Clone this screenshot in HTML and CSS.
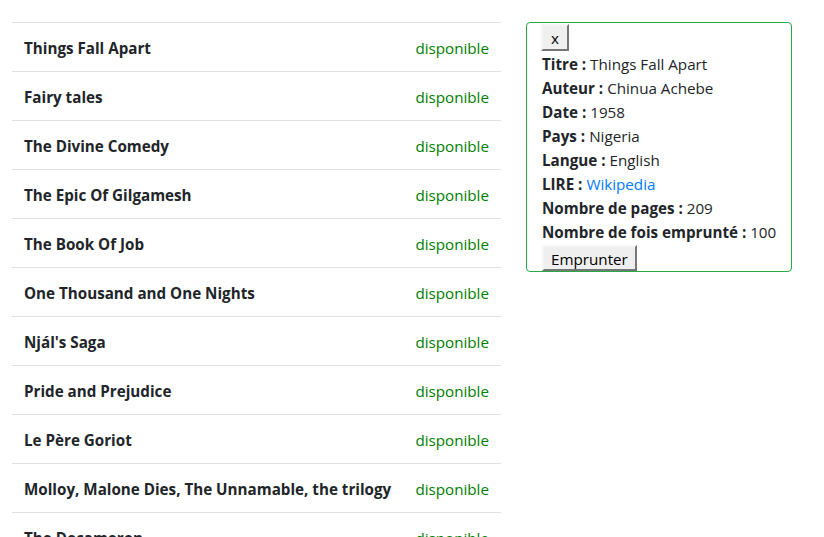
FILE: index.html
```html
<!DOCTYPE html>
<html lang="fr">
<head>
<meta charset="utf-8">
<title>Livres</title>
<link rel="stylesheet" href="styles.css">
</head>
<body>
<div class="page">
  <div class="list-col">
    <table class="books">
      <tbody>
        <tr><td class="title">Things Fall Apart</td><td class="status">disponible</td></tr>
        <tr><td class="title">Fairy tales</td><td class="status">disponible</td></tr>
        <tr><td class="title">The Divine Comedy</td><td class="status">disponible</td></tr>
        <tr><td class="title">The Epic Of Gilgamesh</td><td class="status">disponible</td></tr>
        <tr><td class="title">The Book Of Job</td><td class="status">disponible</td></tr>
        <tr><td class="title">One Thousand and One Nights</td><td class="status">disponible</td></tr>
        <tr><td class="title">Njál's Saga</td><td class="status">disponible</td></tr>
        <tr><td class="title">Pride and Prejudice</td><td class="status">disponible</td></tr>
        <tr><td class="title">Le Père Goriot</td><td class="status">disponible</td></tr>
        <tr><td class="title">Molloy, Malone Dies, The Unnamable, the trilogy</td><td class="status">disponible</td></tr>
        <tr><td class="title">The Decameron</td><td class="status">disponible</td></tr>
      </tbody>
    </table>
  </div>
  <div class="detail-col">
    <div class="detail">
      <button class="btn btn-close">x</button>
      <div class="line"><b>Titre :</b> Things Fall Apart</div>
      <div class="line"><b>Auteur :</b> Chinua Achebe</div>
      <div class="line"><b>Date :</b> 1958</div>
      <div class="line"><b>Pays :</b> Nigeria</div>
      <div class="line"><b>Langue :</b> English</div>
      <div class="line"><b>LIRE :</b> <a href="#">Wikipedia</a></div>
      <div class="line"><b>Nombre de pages :</b> 209</div>
      <div class="line"><b>Nombre de fois emprunté :</b> 100</div>
      <button class="btn">Emprunter</button>
    </div>
  </div>
</div>
</body>
</html>
```

FILE: styles.css
```css
html, body {
  margin: 0;
  padding: 0;
}
body {
  font-family: "Open Sans", "Noto Sans", sans-serif;
  font-size: 15.2px;
  line-height: 24px;
  color: #212529;
  background: #fff;
}
.page {
  display: flex;
  align-items: flex-start;
  padding: 22px 0 0 12px;
  gap: 25px;
}
.list-col {
  width: 489px;
}
.books {
  width: 100%;
  border-collapse: collapse;
}
.books td {
  border-top: 1px solid #dee2e6;
  padding: 13px 12px 11px;
  height: 24px;
}
.books .title {
  font-weight: 700;
  white-space: nowrap;
}
.books .status {
  text-align: right;
  color: #008000;
}
.detail-col {
  width: 266px;
}
.detail {
  border: 1px solid #28a745;
  border-radius: 4px;
  padding: 0 15px;
}
.line {
  white-space: nowrap;
}
.line:first-of-type {
  margin-top: -1px;
}
.detail b {
  font-weight: 700;
}
.detail a {
  color: #007bff;
  text-decoration: none;
}
.btn {
  display: block;
  font-family: inherit;
  font-size: 15.2px;
  line-height: 20px;
  color: #000;
  background: #efefef;
  border: 2px solid;
  border-color: #f5f5f5 #767676 #767676 #f5f5f5;
  padding: 2px 7px 0;
  margin: 1px 0 0;
  border-radius: 0;
}
.btn-close {
  line-height: 21px;
  padding: 2px 8px 0;
  margin: 1px 0 2px -1px;
}
```
